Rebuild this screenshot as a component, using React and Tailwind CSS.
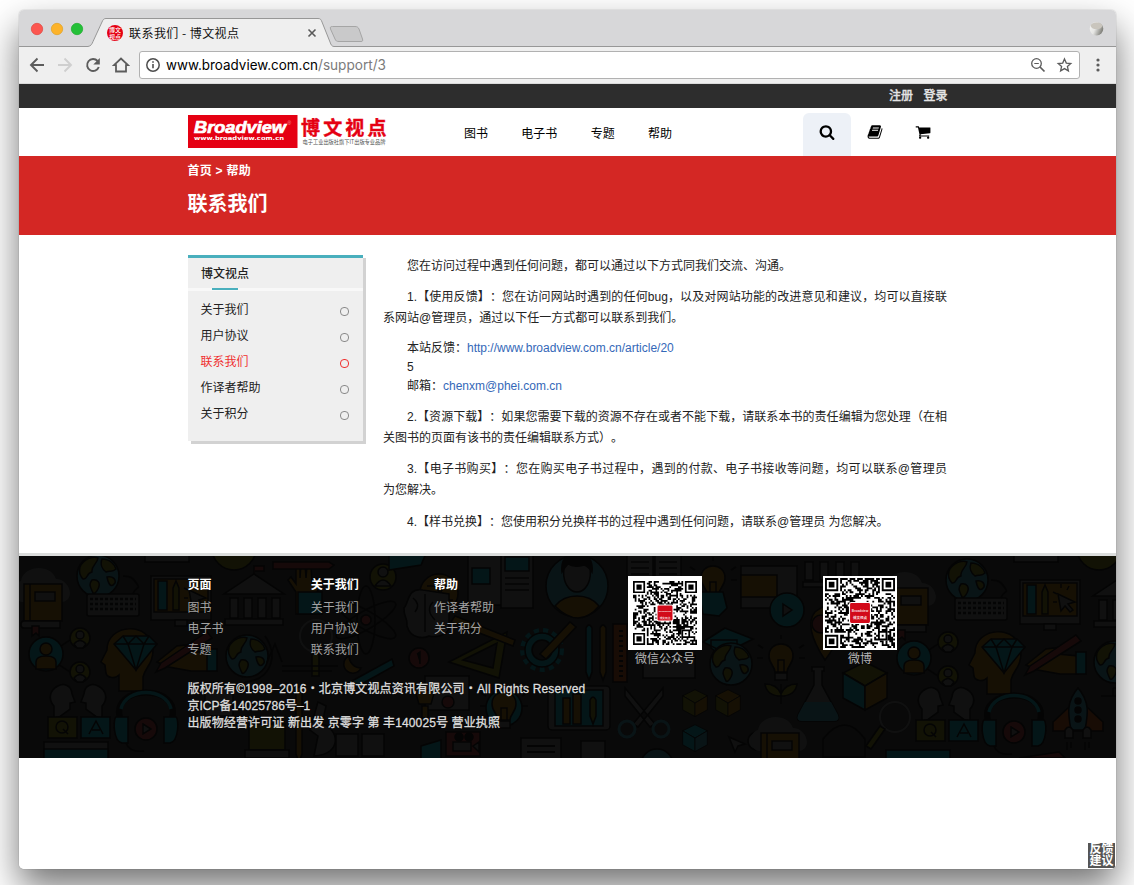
import React from "react";

const CJK = "font-['Liberation_Sans','Noto_Sans_CJK_SC',sans-serif]";
const T = "#021f22", A = "#201602", B = "#0a1c20", G = "#151616", R = "#200a0a", O = "#181903", K = "#020202";

/* ---------- browser chrome ---------- */
function Chrome() {
  return (
    <div className="shrink-0">
      <div className="relative h-[37px] bg-[#d7d7d9]">
        <svg className="absolute inset-0" width="1097" height="37" viewBox="0 0 1097 37">
          <path d="M0 36.500H69C72 36 73 34 74 31.500L83 12C84 9.500 85 8.500 87 8.500H299C301.500 8.500 302 9.500 303 12L311 32C312 35 313 36.500 315 36.500H1097V40H0Z" fill="#efefef" stroke="#979797" />
          <path d="M313.500 16.500H336C338 16.500 339 17 340 19L343.500 29C344 31 343.500 31.500 342 31.500H320C317.500 31.500 317 31 316 29L311.500 19C311 17 311.500 16.500 313.500 16.500Z" fill="#c9c9ca" stroke="#a5a5a5" />
          <circle cx="18" cy="19" r="5.700" fill="#fc5650" stroke="#e0443e" strokeWidth=".7" />
          <circle cx="38" cy="19" r="5.700" fill="#fdb32a" stroke="#dfa023" strokeWidth=".7" />
          <circle cx="58" cy="19" r="5.700" fill="#24c038" stroke="#1aab29" strokeWidth=".7" />
          <path d="M289.500 19.500l7 7m0-7l-7 7" stroke="#5a5a5a" strokeWidth="1.600" />
          <defs>
            <linearGradient id="ball" x1="0" y1="0" x2="1" y2=".4">
              <stop offset="0" stopColor="#f4f4f2" /><stop offset=".5" stopColor="#e6e6e4" /><stop offset="1" stopColor="#85857f" />
            </linearGradient>
          </defs>
          <circle cx="1077.500" cy="18.700" r="6.800" fill="url(#ball)" />
          <ellipse cx="1077.500" cy="15.800" rx="5.800" ry="3.300" fill="#c9c5bd" />
          <circle cx="96" cy="23" r="8" fill="#e50012" />
          <g fill="#fff" fontSize="6" fontWeight="500" fontFamily="Noto Sans CJK SC">
            <text x="90" y="21.500">博文</text><text x="90" y="29">视点</text>
          </g>
        </svg>
        <div className="relative pl-[110px] pt-[14px] text-[12px] leading-[18px] tracking-[0.450px] text-[#111] font-['Noto_Sans_CJK_SC',sans-serif]">联系我们 - 博文视点</div>
      </div>
      <div className="flex h-[37px] items-center border-b border-[#dadada] bg-[#efefef]">
        <svg width="120" height="36" viewBox="0 0 120 36" fill="none" stroke="#5c5c5c" strokeWidth="1.900">
          <path d="M25 18H12m6.500-6.500L12 18l6.500 6.500" />
          <path d="M39 18h13m-6.500-6.500L52 18l-6.500 6.500" stroke="#cfcfcf" />
          <path d="M78.600 14A6 6 0 1 0 79.800 20" />
          <path d="M80.800 11v6.500h-6.500z" fill="#5c5c5c" stroke="none" />
          <path d="M95 18.200l7-6.700 7 6.700h-2v6.300h-10v-6.300z" strokeWidth="1.800" />
        </svg>
        <div className="flex h-[28px] w-[941px] items-center rounded-[3px] border border-[#b1b1b1] bg-white">
          <svg className="ml-[6px]" width="16" height="16" viewBox="0 0 16 16" fill="none" stroke="#4d4d4d">
            <circle cx="7" cy="8" r="6.200" strokeWidth="1.500" /><path d="M7 7v4.300M7 4.300v1.500" strokeWidth="1.600" />
          </svg>
          <svg className="ml-[4px]" width="240" height="24" fontSize="14" fontFamily="Inter, sans-serif">
            <text x="0" y="17" fill="#000" textLength="152" lengthAdjust="spacingAndGlyphs">www.broadview.com.cn</text>
            <text x="152" y="17" fill="#7b7b7b" textLength="68" lengthAdjust="spacingAndGlyphs">/support/3</text>
          </svg>
          <svg className="ml-auto mr-[6px]" width="44" height="20" viewBox="0 0 44 20" fill="none" stroke="#5c5c5c">
            <circle cx="7.500" cy="8.500" r="4.800" strokeWidth="1.300" /><path d="M5.300 8.500h4.500" /><path d="M11 12l4.500 4.500" strokeWidth="1.700" />
            <path d="M35.500 3.900l1.800 4.200 4.500.4-3.400 3 1 4.400-3.900-2.300-3.900 2.300 1-4.400-3.400-3 4.500-.4z" strokeWidth="1.300" />
          </svg>
        </div>
        <svg className="ml-[14px]" width="10" height="20" fill="#5c5c5c"><circle cx="4" cy="5" r="1.600" /><circle cx="4" cy="10" r="1.600" /><circle cx="4" cy="15" r="1.600" /></svg>
      </div>
    </div>
  );
}

/* ---------- header ---------- */
function Logo() {
  return (
    <svg width="200" height="34" viewBox="0 0 200 34" className="overflow-visible">
      <rect width="109.500" height="33" fill="#e50012" />
      <text x="6" y="18.300" fontFamily="Liberation Sans" fontWeight="700" fontStyle="italic" fontSize="16.500" fill="#fff" stroke="#fff" strokeWidth=".7" textLength="92" lengthAdjust="spacingAndGlyphs">Broadview</text>
      <text x="99.500" y="9.500" fontFamily="Liberation Sans" fontSize="5" fill="#f9a0a0">®</text>
      <text x="6" y="25" fontFamily="DejaVu Sans" fontWeight="700" fontSize="5.500" fill="#fff" textLength="90" lengthAdjust="spacingAndGlyphs">www.broadview.com.cn</text>
      <text x="113" y="20" fontFamily="Noto Sans CJK SC" fontWeight="700" fontSize="19" fill="#e50012" stroke="#e50012" strokeWidth=".4" textLength="85.500">博文视点</text>
      <text x="114.500" y="29" fontFamily="Noto Sans CJK SC" fontSize="5.500" fill="#555" textLength="83" lengthAdjust="spacingAndGlyphs">电子工业出版社旗下IT出版专业品牌</text>
    </svg>
  );
}

const FA = {
  search: "M1216 832q0-185-131.500-316.500t-316.500-131.500-316.500 131.500-131.500 316.500 131.500 316.500 316.500 131.500 316.500-131.500 131.500-316.500zm512 832q0 52-38 90t-90 38q-54 0-90-38l-343-342q-179 124-399 124-143 0-273.500-55.500t-225-150-150-225-55.500-273.500 55.500-273.500 150-225 225-150 273.500-55.500 273.500 55.500 225 150 150 225 55.500 273.500q0 220-124 399l343 343q37 37 37 90z",
  book: "M1703 478q40 57 18 129l-275 906q-19 64-76.500 107.500t-122.500 43.500h-923q-77 0-148.500-53.500t-99.500-131.500q-24-67-2-127 0-4 3-27t4-37q1-8-3-21.500t-3-19.500q2-11 8-21t16.500-23.500 16.500-23.500q23-38 45-91.500t30-91.500q3-10 .5-30t-.5-28q3-11 17-28t17-23q21-36 42-92t25-90q1-9-2.500-32t.5-28q4-13 22-30.500t22-22.500q19-26 42.500-84.500t27.500-96.500q1-8-3-25.500t-2-26.500q2-8 9-18t18-23 17-21q8-12 16.500-30.500t15-35 16-36 19.500-32 26.500-23.500 36-11.500 47.500 5.500l-1 3q38-9 51-9h761q74 0 114 56t18 130l-274 906q-36 119-71.500 153.500t-128.500 34.500h-869q-27 0-38 15-11 16-1 43 24 70 144 70h923q29 0 56-15.500t35-41.500l300-987q7-22 5-57 38 15 59 43zm-1064 2q-4 13 2 22.500t20 9.500h608q13 0 25.500-9.500t16.500-22.500l21-64q4-13-2-22.500t-20-9.500h-608q-13 0-25.500 9.500t-16.500 22.500zm-83 256q-4 13 2 22.500t20 9.500h608q13 0 25.500-9.500t16.500-22.500l21-64q4-13-2-22.500t-20-9.500h-608q-13 0-25.500 9.500t-16.500 22.500z",
  cart: "M704 1536q0 52-38 90t-90 38-90-38-38-90 38-90 90-38 90 38 38 90zm896 0q0 52-38 90t-90 38-90-38-38-90 38-90 90-38 90 38 38 90zm128-1088v512q0 24-16.500 42.500t-40.500 21.500l-1044 122q13 60 13 70 0 16-24 64h920q26 0 45 19t19 45-19 45-45 19h-1024q-26 0-45-19t-19-45q0-11 8-31.500t16-36 21.500-40 15.500-29.500l-177-823h-204q-26 0-45-19t-19-45 19-45 45-19h256q16 0 28.500 6.500t19.500 15.500 13 24.500 8 26 5.500 29.500 4.500 26h1201q26 0 45 19t19 45z",
};
const Fa = ({ name }) => <svg width="16" height="16" viewBox="0 0 1792 1792"><path d={FA[name]} /></svg>;

function Header() {
  return (
    <>
      <div className="flex h-6 shrink-0 gap-[10.500px] bg-[#2d2d2d] pl-[870px] text-[12px] font-medium leading-[25px] text-[#e4e4e4] [-webkit-text-stroke:0.3px_#e4e4e4]"><span>注册</span><span>登录</span></div>
      <div className="flex h-12 shrink-0 pl-[169px] text-[12px] text-black">
        <div className="w-[276px] pt-[7px]"><Logo /></div>
        <nav className="flex w-[339px] gap-[33.300px] leading-[53px]">
          <span>图书</span><span>电子书</span><span>专题</span><span>帮助</span>
        </nav>
        <div className="mt-[5px] flex h-[43px]">
          <div className="flex w-12 justify-center rounded-t-[6px] bg-[#edf1f7] pt-[11px]"><Fa name="search" /></div>
          <div className="flex w-12 justify-center pt-[11px]"><Fa name="book" /></div>
          <div className="flex w-12 justify-center pt-[11px]"><Fa name="cart" /></div>
        </div>
      </div>
      <div className="h-[79px] shrink-0 bg-[#d42724] pl-[168.500px] font-bold text-white">
        <div className="pt-[5px] text-[12px] leading-5 tracking-[0.250px]">首页 &gt; 帮助</div>
        <h1 className="pt-[8px] text-[20px] leading-[31px]">联系我们</h1>
      </div>
    </>
  );
}

/* ---------- main ---------- */
function Sidebar() {
  const items = ["关于我们", "用户协议", "联系我们", "作译者帮助", "关于积分"];
  return (
    <aside className="h-[186px] w-[175px] border-t-[3px] border-[#49afbd] bg-[#efefef] text-[12px] shadow-[3px_3px_0_#d2d2d2]">
      <div className="h-[33px] border-b-[3px] border-[#f8f8f8] pl-[13px]">
        <div className="h-[30px] pt-[1px] leading-[30px] font-medium text-[#222]">博文视点</div>
        <div className="ml-[11px] h-[2px] w-[26px] bg-[#49afbd]" />
      </div>
      <ul className="pt-[5px]">
        {items.map((t, i) => (
          <li key={t} className={`flex h-[26px] items-center justify-between pl-[12.500px] pr-[14px] ${i === 2 ? "text-[#f0302f]" : "text-[#222]"}`}>
            <span className="pt-[2px]">{t}</span>
            <i className={`mt-[4px] h-[9px] w-[9px] rounded-[4px] border ${i === 2 ? "border-[#f0302f]" : "border-[#8a8a8a]"}`} />
          </li>
        ))}
      </ul>
    </aside>
  );
}

const Line = ({ children, indent, full }) => (
  <div className={`whitespace-nowrap ${indent ? "pl-6" : ""} ${full ? "[text-align-last:justify]" : ""}`}>{children}</div>
);

function Article() {
  return (
    <article className="flex w-[564px] flex-col gap-[10.400px] pt-[0.600px] text-[12px] leading-[21px] text-[#222] [text-spacing-trim:space-all]">
      <p><Line indent>您在访问过程中遇到任何问题，都可以通过以下方式同我们交流、沟通。</Line></p>
      <div>
        <Line indent full>1.【使用反馈】：您在访问网站时遇到的任何bug，以及对网站功能的改进意见和建议，均可以直接联</Line>
        <Line>系网站@管理员，通过以下任一方式都可以联系到我们。</Line>
      </div>
      <div className="leading-[19px]">
        <Line indent>本站反馈：<a className="text-[#3468b8]">http://www.broadview.com.cn/article/20</a></Line>
        <Line indent>5</Line>
        <Line indent>邮箱：<a className="text-[#3468b8]">chenxm@phei.com.cn</a></Line>
      </div>
      <div>
        <Line indent full>2.【资源下载】：如果您需要下载的资源不存在或者不能下载，请联系本书的责任编辑为您处理（在相</Line>
        <Line>关图书的页面有该书的责任编辑联系方式）。</Line>
      </div>
      <div>
        <Line indent full>3.【电子书购买】：您在购买电子书过程中，遇到的付款、电子书接收等问题，均可以联系@管理员</Line>
        <Line>为您解决。</Line>
      </div>
      <p><Line indent>4.【样书兑换】：您使用积分兑换样书的过程中遇到任何问题，请联系@管理员 为您解决。</Line></p>
    </article>
  );
}

/* ---------- footer artwork ---------- */
const at = (x, y, s = 1) => `translate(${x} ${y}) scale(${s})`;
const Book = ({ x, y }) => (
  <g transform={at(x, y)}>
    <path d="M2 42C-6 42-10 24 1 21 3 5 31 3 36 19 50 19 56 40 42 42Z" fill={G} stroke="none" />
    <path d="M4 24h38v37H4z" fill={A} /><path d="M4 61c-4 0-4 7 0 7h36v-7z" fill={G} /><path d="M10 24v37" /><path d="M15 32h20v9H15z" fill={G} /><path d="M12 66v10l4-3 3 3V66z" fill={R} />
  </g>
);
const Globe = ({ x, y, stand }) => (
  <g transform={at(x, y)}>
    <circle r="21" fill={B} />
    <path d="M-18-9C-14-18-4-20 0-18-1-12-7-10-6-4-12-3-10 4-15 3-18 0-19-5-18-9ZM4-17c8 0 13 6 14 10-4 4-6 1-10 3-4-3-6-8-4-13ZM-6 4c6-1 9 3 6 9-2 4-4 5-5 4-2-5-5-8-1-13ZM9 1c6-1 9 2 8 6-3 4-6 4-8-6Z" fill={O} />
    {stand && <path d="M18-20C32 0 24 24-2 26m0 0v8m-12 0h24" fill="none" />}
  </g>
);
const Keyboard = ({ x, y }) => (
  <g transform={at(x, y)}><rect width="52" height="22" rx="2" fill={G} /><path d="M3 5h46M3 10h46M3 15h46" strokeDasharray="3 2" strokeWidth="2.500" /><path d="M46 0c2-8 8-4 4-10s-6-8-14-8" fill="none" /></g>
);
const Monitor = ({ x, y }) => (
  <g transform={at(x, y)}><path d="M0 0h60v44H0z" fill={G} /><path d="M3 3h54v33H3z" fill={A} /><path d="M7 5h9v29H7z" fill={T} /><path d="M22 34V12l3-7 3 7v22z" fill={O} /><path d="M38 14l17 8-7 2 5 6-3 2-5-6-4 5zM41 4v4m-8 4l4 2m-4 8h4M49 6l-2 4" fill={G} /><path d="M24 44h12v6H24z" fill={G} /></g>
);
const Bank = ({ x, y }) => (
  <g transform={at(x, y)} fill={G}><path d="M0 20L30 0l30 20zM1 45h58v6H1z" /><path d="M6 24h8v20H6zM20 24h8v20h-8zM34 24h8v20h-8zM48 24h8v20h-8z" /><path d="M30 0v-8h10v5H31" fill={R} /></g>
);
const People = ({ x, y }) => (
  <g transform={at(x, y)}><path d="M12-6L24-14M12 10l12 8" /><circle r="17" fill={T} /><circle cy="-5" r="6" fill={A} /><path d="M-10 15V8q0-6 10-6t10 6v7z" fill={A} />
    {[-16, 18].map((k) => <g key={k} transform={at(34, k)}><circle r="10" fill={O} /><circle cy="-3" r="4" fill={G} /><path d="M-6 6q6-7 12 0l-3 4h-6z" fill={G} /></g>)}
  </g>
);
const Head = ({ x, y }) => (
  <g transform={at(x, y)}><path d="M18 64V48c-4 4-12 3-13-2l-1-8-4-3 6-12C6-4 50-6 52 22c0 16-8 18-10 28v14z" fill={A} /><path d="M13 17L22 9h26l8 8-21 26z" fill={T} /><path d="M13 17h43M22 9l5 8 8 26 8-26 5-8M27 17l8-8 8 8" fill="none" /></g>
);
const PenHand = ({ x, y }) => (
  <g transform={at(x, y)}><path d="M0 30l20-16 18-2-8 7 22 2v18H34l-22-4z" fill={A} /><path d="M50 17h10v22H50z" fill={T} /><path d="M-1 40l5-9L50 0l5 6L8 36z" fill={R} /></g>
);
const QA = ({ x, y }) => (
  <g transform={at(x, y)}><path d="M6 34V22C-8 6 22-10 24 10l3 8-5 1v6l-11 8zM54 34V22C68 6 38-10 36 10l-3 8 5 1v6l11 8z" fill={G} /><path d="M0 33h29v21H0z" fill={O} /><path d="M33 33h29v21H33z" fill={T} /><circle cx="14" cy="43" r="6" fill="none" /><path d="M15 45l5 5M41 50l7-13 7 13m-11-4h8" fill="none" /></g>
);
const Headphones = ({ x, y }) => (
  <g transform={at(x, y)}><path d="M-25 18C-40-20 40-20 25 18" fill="none" stroke={K} strokeWidth="6" /><path d="M-25 6C-20-16 20-16 25 6" fill="none" stroke={T} strokeWidth="3.500" /><path d="M-30 14h12v26h-6c-9-2-9-24-6-26zM30 14H18v26h6c9-2 9-24 6-26z" fill={T} /><circle cy="26" r="11" fill={R} /><path d="M-3 21l8 5-8 5z" fill={G} /><path d="M-20 40q4 10 18 8" fill="none" /></g>
);
const Bulb = ({ x, y }) => (
  <g transform={at(x, y)}><path d="M-6 14C-6 8-12 6-12-2-12-18 12-18 12-2 12 6 6 8 6 14z" fill={A} /><path d="M-3 14V2h6v12M-18-10l-5-3m5 13h-6m42-10l5-3m-5 13h6M0-19v-4" fill="none" /><path d="M-6 15H6v7H-6z" fill={G} /></g>
);
const Cube = ({ x, y, s = 1, c = [O, T, A] }) => (
  <g transform={at(x, y, s)}><path d="M0-22L22-11 0 2-22-11z" fill={c[0]} /><path d="M-22-11L0 2v24l-22-12z" fill={c[1]} /><path d="M22-11L0 2v24l22-12z" fill={c[2]} /></g>
);
const Pencil = ({ x, y, h = 56, c = A }) => <path transform={at(x, y)} d={`M-3 4q3-6 6 0V${h - 8}L0 ${h}l-3-8z`} fill={c} />;
const Page = ({ x, y, w = 28, h = 50, c = T }) => (
  <g transform={at(x, y)}><path d={`M0 0h${w}v${h}H0z`} fill={G} /><path d={`M4 5h${w - 8}v14H4z`} fill={c} /><path d={`M4 26h${w - 8}M4 32h${w - 8}M4 38h${w - 8}`} /></g>
);
const Lens = ({ x, y }) => <g transform={at(x, y)}><circle r="15" fill="none" stroke={G} strokeWidth="2" /><path d="M-10 12l-14 20-5-3 14-20z" fill={O} /></g>;
const Gear = ({ x, y }) => <g transform={at(x, y)}><circle r="19" fill="none" stroke={T} strokeWidth="6" strokeDasharray="5 4" /><circle r="17" fill={T} /><circle r="10" fill="#090909" /><path d="M-2 4L28-28l6 5L4 9z" fill={A} /></g>;
const Scissors = ({ x, y }) => <g transform={at(x, y)}><path d="M-19-20L11 16l-5 3-25-31zM19-20l-30 36 5 3 25-31z" fill={G} /><circle cx="-17" cy="21" r="8" fill="none" stroke={B} strokeWidth="3" /><circle cx="17" cy="21" r="8" fill="none" stroke={B} strokeWidth="3" /></g>;
const Rocket = ({ x, y }) => <g transform={at(x, y)}><path d="M-10 18l-15 14v9h50v-9L10 18z" fill="#220e03" /><path d="M0-2C-12 12-10 24-7 40H7C10 24 12 12 0-2z" fill={B} /><circle cy="11" r="3" /><circle cy="20" r="3" /><circle cy="29" r="3" /><path d="M-13 48v-8q4-6 8 0v8zM5 48v-8q4-6 8 0v8zM-11 52v8m4-8v6m14-6v8m4-8v6" fill={G} /></g>;
const Flask = ({ x, y }) => <g transform={at(x, y)}><path d="M-6 0H6v4H4v14l16 30q2 6-4 6h-32q-6 0-4-6l16-30V4h-2z" fill={G} /><path d="M-13 35h26l7 13q2 6-4 6h-32q-6 0-4-6z" fill={B} stroke="none" /></g>;

function Artwork() {
  return (
    <svg className="absolute inset-0 opacity-60" width="1097" height="202" viewBox="0 0 1097 202" stroke={K} strokeWidth="1.500" fill={K}>
      <Book x={1} y={4} /><Globe x={79} y={20} /><Keyboard x={68} y={38} /><Monitor x={132} y={20} /><Bank x={205} y={18} />
      <path d="M126-2h44v8h-44z" fill={G} /><path d="M193-8a22 22 0 0 0 44 0z" fill={O} />
      <path d="M277 58V36l-8-12 3-3 5 7V10h4v12l1-14h4l1 14 1-12h4l1 18 5-6 3 3-5 20v13z" fill={A} /><path d="M279 36h24v22h-24z" fill={T} /><path d="M254 6h56l5 3-5 4h-56z" fill={R} />
      <People x={27} y={98} /><Head x={82} y={71} /><PenHand x={138} y={76} /><Globe x={228} y={100} stand />
      <QA x={29} y={128} /><Headphones x={127} y={147} /><path d="M25 186h64v20H25z" fill={G} /><path d="M25 193h64v12H25z" fill={T} />
      <circle cx="297" cy="80" r="16" fill="none" stroke={G} strokeWidth="2" /><path d="M293 98h7v22h-7z" fill={O} /><path d="M263 110h56M263 115h50M248 106l8-18 7 18" fill="none" />
      <g fill="none"><ellipse cx="347" cy="64" rx="9" ry="34" /><ellipse cx="347" cy="64" rx="9" ry="34" transform="rotate(60 347 64)" /><ellipse cx="347" cy="64" rx="9" ry="34" transform="rotate(120 347 64)" /></g>
      <circle cx="347" cy="64" r="5" fill={R} /><circle cx="364" cy="21" r="13" fill={O} /><circle cx="364" cy="16" r="5" fill={G} /><path d="M356 30q8-12 16 0z" fill={G} />
      <path d="M330 100a9 9 0 1 0 12 12 12 12 0 0 1-12-12z" fill={A} /><path d="M333 125l40-22 2 7-36 20z" fill={T} />
      <path d="M186 132q12-14 28 4v24h-28z" fill={G} /><path d="M230 168h36v26h-36z" fill={O} /><path d="M226 194h44v8h-44z" fill={G} /><Pencil x={280} y={130} h={76} /><path d="M295 200c30-2 24-28 8-32l4-18-8-4-8 28 8 6z" fill={G} /><path d="M317 178h22v22h-22zM343 178h22v22h-22z" fill={G} />
      <path d="M370-5h38l-6 14-32 5z" fill={T} /><circle cx="420" cy="37" r="19" fill={A} /><path d="M408 30h8l10 14h8M408 44h8l10-14h8" fill="none" />
      <path d="M404 34c-16-3-14 14-19 18 0 12 4 8 3 18 4 14 18 12 22 10 10 2 20-2 20-10V38z" fill={G} /><path d="M394 42q8 6 2 14m10-18v38m8-30q-8 8 2 18" fill="none" />
      <path d="M449-3h34v52h-34z" fill={G} /><path d="M453 12h18v16h-18zM485-4h20v15h-20z" fill={T} /><Page x={482} y={-4} w={32} h={56} />
      <circle cx="558" cy="30" r="31" fill={B} /><path d="M536 50q8-10 22-10t22 10q-20 24-44 0z" fill={A} /><path d="M545 12q0-12 13-13t13 13c2 14-5 24-13 24s-15-10-13-24z" fill={G} /><path d="M543 16q-2-18 15-18t15 18q-4-6-8-7-10 3-16-1-3 3-6 8z" />
      <Page x={608} y={-20} w={26} h={42} /><Page x={636} y={-20} w={26} h={42} /><Bulb x={694} y={24} />
      <path d="M684 58l-4-22h24l4 16-8 8z" fill={T} /><path d="M430 106l58-30-8 46z" fill={O} /><path d="M444 104l34-17-4 25z" fill="#090909" /><path d="M436 60l60 24-2 6-62-24z" fill={A} />
      <circle cx="400" cy="102" r="10" fill={R} /><path d="M398 98l3-2v12" /><Gear x={523} y={94} /><Pencil x={570} y={68} c={T} /><Pencil x={584} y={68} /><path d="M594 68h14v58h-14z" fill="#220e03" /><path d="M602 74v50" strokeDasharray="2 3" strokeWidth="4" />
      <path d="M706 72l-22 14 22 11 28-14zM692 92q14 12 26 0v-8h-26z" fill={T} /><Globe x={712} y={108} /><path d="M624 100h52v22h-52z" fill={G} />
      <path d="M406 120h44v34h-44z" fill={G} /><circle cx="429" cy="146" r="6" fill={R} /><path d="M396 134h20l-4 14h-12zM403 150h6v12h-6z" fill={A} /><circle cx="485" cy="152" r="18" fill={T} /><Bulb x={485} y={150} />
      <rect x="529" y="130" width="62" height="44" rx="4" fill={G} /><path d="M536 134h48v36h-48z" fill={T} /><path d="M544 142h7v26h-7zM554 138h8v30h-8z" fill={A} /><Pencil x={574} y={140} h={28} c={O} />
      <Scissors x={625} y={152} /><Cube x={676} y={146} s={0.56} c={[O, O, A]} /><Cube x={709} y={146} s={0.56} c={[A, O, A]} /><Cube x={676} y={181} s={0.56} c={[T, T, B]} />
      <path d="M427 176h34v24h-34z" fill={R} /><circle cx="440" cy="181" r="4" /><circle cx="450" cy="181" r="4" /><path d="M434 186h18v9h-18zM454 190l6-4v10z" fill={G} /><path d="M402 190l20-6v20h-20z" fill={T} /><path d="M502 182h40v22h-40z" fill={G} /><path d="M508 190h28M508 196h28" strokeWidth="2" /><path d="M562 185h24v18h-24z" fill={G} /><circle cx="638" cy="209" r="16" fill={B} /><path d="M710 181l16 7-7 2-3 6z" fill={G} /><circle cx="738" cy="185" r="9" fill={G} />
      <path d="M722 10h56v42h-56z" fill={G} /><path d="M722 19h36v22h-36z" fill={A} /><circle cx="768" cy="54" r="17" fill={T} /><path d="M764 48l9 6-9 6z" fill={G} /><path d="M786 6h8v18h-8zM801 6h8v18h-8zM817 6h8v18h-8zM832 6h8v18h-8zM784 26h60v5h-60z" fill={G} />
      <path d="M806 104q-22-34-10-48 20-16 30 4-2 20-20 44z" fill={A} /><circle cx="802" cy="68" r="9" fill={R} />
      <Bulb x={762} y={102} /><path d="M762 128v20m0-8q-14 0-16-12 12 0 16 10 4-10 16-10-2 12-16 12" fill={O} /><Flask x={799} y={111} /><Cube x={846} y={128} />
      <Book x={867} y={8} /><Globe x={948} y={24} /><Keyboard x={936} y={42} /><Monitor x={1001} y={24} /><Bank x={1074} y={20} /><path d="M995-2h44v8h-44z" fill={G} /><path d="M1058-8a22 22 0 0 0 44 0z" fill={O} />
      <People x={895} y={102} /><Head x={950} y={74} /><PenHand x={1007} y={79} /><Globe x={1096} y={106} stand /><QA x={897} y={131} /><Headphones x={995} y={150} /><path d="M867 194h64v12h-64z" fill={T} />
      <Rocket x={1059} y={134} /><Lens x={876} y={161} /><Book x={738} y={153} /><path d="M804 201v-18q22-28 42 0v18z" fill="none" /><path d="M1000 202l40-6 6 6z" fill={R} />
    </svg>
  );
}

/* ---------- QR codes ---------- */
function Qr({ seed, size, pad, logo }) {
  const n = 37;
  let s = seed;
  const rnd = () => { s = (s * 1103515245 + 12345) % 2147483648; return s / 2147483648; };
  let d = "";
  for (let r = 0; r < n; r++) for (let c = 0; c < n; c++) {
    const on = rnd() > 0.5;
    const finder = (r < 8 && (c < 8 || c > n - 9)) || (r > n - 9 && c < 8);
    const align = r > 27 && r < 33 && c > 27 && c < 33;
    if (on && !finder && !align) d += `M${c} ${r}h1v1h-1z`;
  }
  const k = logo * n / size;
  return (
    <svg width="74" height="74" viewBox="0 0 74 74" className="bg-white">
      <g transform={`translate(${pad} ${pad}) scale(${size / n})`}>
        <path d={d} />
        {[[0, 0], [30, 0], [0, 30]].map(([x, y]) => <path key={x + "-" + y} fillRule="evenodd" d={`M${x} ${y}h7v7h-7zM${x + 1} ${y + 1}v5h5v-5zM${x + 2} ${y + 2}h3v3h-3z`} />)}
        <path fillRule="evenodd" d="M28 28h5v5h-5zM29 29v3h3v-3zM30 30h1v1h-1z" />
        <rect x={18.5 - k / 2} y={18.5 - k / 2} width={k} height={k} rx="1" fill="#d20a1a" stroke="#fff" strokeWidth=".6" />
      </g>
      <g fill="#fff" textAnchor="middle" fontWeight="700" opacity=".85">
        <text x="37" y="35.500" fontSize={logo / 6.5} fontFamily="Liberation Sans">Broadview</text>
        <text x="37" y="42.500" fontSize={logo / 6} fontFamily="Noto Sans CJK SC">博文视点</text>
      </g>
    </svg>
  );
}

function Footer() {
  const cols = [["页面", "图书", "电子书", "专题"], ["关于我们", "关于我们", "用户协议", "联系我们"], ["帮助", "作译者帮助", "关于积分"]];
  return (
    <footer className="relative h-[205px] shrink-0 overflow-hidden border-t-[3px] border-[#dbdddc] bg-[#090909] text-[12px]">
      <Artwork />
      <div className="relative flex h-[124px] pl-[168.500px] pt-[20px]">
        {cols.map((c, i) => (
          <div key={i} className="w-[123.300px] leading-[21px] text-[#a3a3a3]">
            <div className="mb-[4px] font-bold leading-[18px] text-white">{c[0]}</div>
            {c.slice(1).map((t) => <div key={t}>{t}</div>)}
          </div>
        ))}
        <div className="ml-[70.600px] flex w-[195px] flex-col items-start text-[#b5b5b5]">
          <Qr seed={77} size={64} pad={5} logo={16} /><span className="w-[74px] text-center leading-[19px]">微信公众号</span>
        </div>
        <div className="flex flex-col items-start text-[#b5b5b5]">
          <Qr seed={4242} size={70} pad={2} logo={21} /><span className="w-[74px] text-center leading-[19px]">微博</span>
        </div>
      </div>
      <div className="relative pl-[168.500px] pt-[1px] leading-[17px] text-[#dedede] [-webkit-text-stroke:0.3px_#dedede]">
        <p className="tracking-[0.160px]">版权所有©1998–2016・北京博文视点资讯有限公司・All Rights Reserved</p>
        <p>京ICP备14025786号–1</p>
        <p className="tracking-[0.120px]">出版物经营许可证 新出发 京零字 第 丰140025号 营业执照</p>
      </div>
    </footer>
  );
}

export default function App() {
  return (
    <div className={`h-[885px] w-[1134px] overflow-hidden bg-white pl-[19px] pt-[10px] ${CJK}`}>
      <div className="h-[859px] w-[1097px] rounded-[5px] shadow-[0_18px_36px_rgba(0,0,0,0.55),0_0_1px_rgba(0,0,0,0.5)]">
        <div className="relative flex h-full flex-col overflow-hidden rounded-[5px] bg-white">
          <Chrome />
          <Header />
          <main className="flex h-[318px] shrink-0 gap-[20px] pl-[169px] pt-[20px]">
            <Sidebar />
            <Article />
          </main>
          <Footer />
          <div className="absolute bottom-[1px] right-[1px] h-[25px] w-[27px] bg-[#555] pl-[1.500px] text-[12px] font-bold leading-[12px] text-white">反馈<br />建议</div>
        </div>
      </div>
    </div>
  );
}
